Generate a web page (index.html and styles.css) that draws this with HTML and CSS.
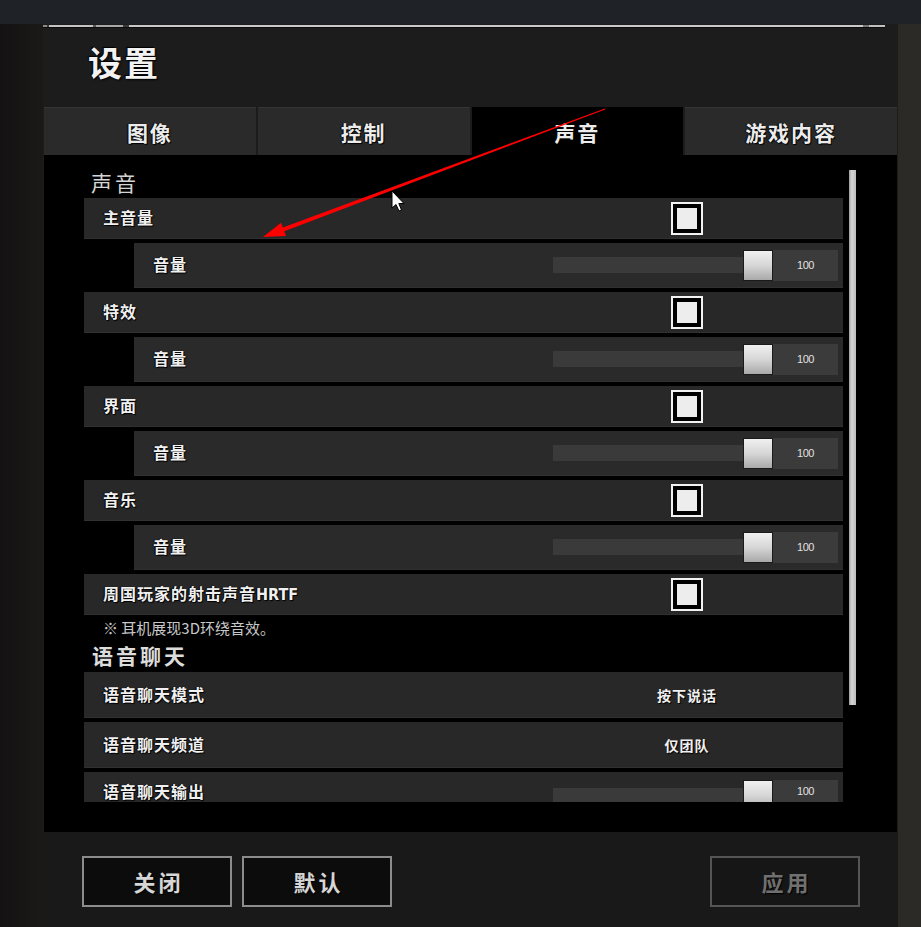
FILE: index.html
```html
<!DOCTYPE html>
<html lang="zh-CN">
<head>
<meta charset="utf-8">
<title>设置</title>
<link rel="stylesheet" href="styles.css">
</head>
<body>
<div class="screen">
  <div class="panel">
    <div class="topline"></div>
    <h1 class="title">设置</h1>
    <nav class="tabs">
      <div class="tab">图像</div>
      <div class="tab">控制</div>
      <div class="tab active">声音</div>
      <div class="tab">游戏内容</div>
    </nav>
    <div class="content">
      <div class="scroll">
        <div class="section">声音</div>

        <div class="row"><span class="label">主音量</span><span class="check"><i></i></span></div>
        <div class="row sub"><span class="label">音量</span><span class="slider"><span class="track"></span><span class="knob"></span><span class="val">100</span></span></div>

        <div class="row"><span class="label">特效</span><span class="check"><i></i></span></div>
        <div class="row sub"><span class="label">音量</span><span class="slider"><span class="track"></span><span class="knob"></span><span class="val">100</span></span></div>

        <div class="row"><span class="label">界面</span><span class="check"><i></i></span></div>
        <div class="row sub"><span class="label">音量</span><span class="slider"><span class="track"></span><span class="knob"></span><span class="val">100</span></span></div>

        <div class="row"><span class="label">音乐</span><span class="check"><i></i></span></div>
        <div class="row sub"><span class="label">音量</span><span class="slider"><span class="track"></span><span class="knob"></span><span class="val">100</span></span></div>

        <div class="row"><span class="label">周国玩家的射击声音<span class="latin">HRTF</span></span><span class="check"><i></i></span></div>
        <div class="note">※ 耳机展现3D环绕音效。</div>

        <div class="section second">语音聊天</div>
        <div class="row tall"><span class="label">语音聊天模式</span><span class="choice">按下说话</span></div>
        <div class="row tall"><span class="label">语音聊天频道</span><span class="choice">仅团队</span></div>
        <div class="row tall last"><span class="label">语音聊天输出</span><span class="slider"><span class="track"></span><span class="knob"></span><span class="val">100</span></span></div>
      </div>
      <div class="scrollbar"></div>
    </div>
    <div class="footer">
      <button class="btn">关闭</button>
      <button class="btn">默认</button>
      <button class="btn disabled">应用</button>
    </div>
  </div>
</div>
<svg class="overlay" width="921" height="927" viewBox="0 0 921 927">
  <polygon fill="#ff0000" points="263,237 281.1,222.7 282.9,227.4 604.8,108.5 605.2,109.5 284.3,231.2 286.1,235.9"/>
  <path d="M392 191 L392 208 L396 204.5 L399 211 L401.5 210 L398.8 203.5 L404 203.5 Z" fill="#fff" stroke="#000" stroke-width="1" stroke-linejoin="round"/>
</svg>
</body>
</html>
```

FILE: styles.css
```css
html, body {
  margin: 0;
  padding: 0;
}
body {
  width: 921px;
  height: 927px;
  overflow: hidden;
  position: relative;
  font-family: "Noto Sans CJK SC", "Noto Sans", "Liberation Sans", sans-serif;
  background:
    linear-gradient(#1f2226 0, #1f2226 24px, transparent 24px),
    linear-gradient(90deg, #141212 0, #1b1918 43px, #24221f 600px, #2b2a27 921px);
}
.screen {
  padding-top: 24px;
  padding-left: 43px;
}
.panel {
  width: 855px;
  height: 903px;
  background: #1c1c1c;
  display: flex;
  flex-direction: column;
}
.topline {
  width: 842px;
  height: 2px;
  margin-top: 1px;
  background:
    linear-gradient(90deg, #8a8a8a 0, #8a8a8a 4px, #3a3a3a 4px, #3a3a3a 6px, #c4c4c4 6px, #c4c4c4 50px, #5a5a5a 50px, #5a5a5a 53px, #a8a8a8 53px, #a8a8a8 80px, #3a3a3a 80px, #3a3a3a 86px, #c9c9c9 86px, #c9c9c9 820px, #777 820px, #777 826px, #c0c0c0 826px);
  border-bottom: 1px solid #0c0c0c;
  flex: none;
}
.title {
  margin: 0;
  height: 79px;
  box-sizing: border-box;
  padding: 15px 0 0 45px;
  font-size: 34px;
  line-height: 38px;
  font-weight: 700;
  letter-spacing: 2px;
  color: #f2f2f2;
  text-shadow: 1px 1px 2px #000, -1px -1px 1px #000;
  flex: none;
}
.tabs {
  display: flex;
  gap: 2px;
  margin-left: 1px;
  width: 853px;
  height: 48px;
  flex: none;
}
.tab {
  flex: 1;
  background: #2a2a2a;
  border-top: 1px solid #353535;
  box-sizing: border-box;
  display: flex;
  align-items: center;
  justify-content: center;
  font-size: 21px;
  font-weight: 700;
  letter-spacing: 2px;
  color: #ececec;
  text-shadow: 1px 1px 1px #000, -1px 0 1px #000;
}
.tab.active {
  background: #000;
  border-top-color: #000;
}
.content {
  margin-left: 1px;
  width: 853px;
  height: 677px;
  background: #000;
  display: flex;
  flex: none;
}
.scroll {
  margin-left: 40px;
  width: 759px;
  height: 647px;
  overflow: hidden;
  box-sizing: border-box;
  padding-top: 12px;
}
.scrollbar {
  margin-left: 6px;
  margin-top: 15px;
  width: 7px;
  height: 535px;
  background: linear-gradient(90deg, #9d9d9d, #d6d6d6 40%, #bcbcbc);
}
.section {
  height: 31px;
  line-height: 31px;
  padding-left: 7px;
  font-size: 21px;
  letter-spacing: 3px;
  color: #d4d4d4;
}
.section.second {
  height: 32px;
  line-height: 30px;
  padding-left: 8px;
  font-weight: 700;
  color: #dcdcdc;
}
.row {
  height: 41px;
  margin-bottom: 4px;
  background: #282828;
  border-bottom: 1px solid #313131;
  box-sizing: border-box;
  display: flex;
  align-items: center;
  padding-left: 19px;
}
.row.sub {
  height: 45px;
  margin-left: 50px;
  background: #2a2a2a;
}
.row.tall {
  height: 46px;
}
.row.last {
  align-items: flex-start;
}
.row.last .label {
  padding-top: 7px;
}
.row.last .slider {
  margin-top: 8px;
}
.label {
  flex: 1;
  font-size: 16px;
  font-weight: 700;
  letter-spacing: 1px;
  color: #f0f0f0;
  text-shadow: 1px 1px 1px #000, -1px 0 1px #000;
  padding-bottom: 2px;
}
.latin {
  font-family: "Liberation Sans Narrow", "DejaVu Sans Condensed", "Liberation Sans", sans-serif;
  letter-spacing: 0;
}
.check {
  width: 32px;
  height: 33px;
  box-sizing: border-box;
  border: 2px solid #f2f2f2;
  background: #000;
  padding: 4px;
  margin-right: 140px;
  display: flex;
}
.check i {
  flex: 1;
  background: #ededed;
}
.choice {
  width: 200px;
  margin-right: 56px;
  text-align: center;
  font-size: 14px;
  font-weight: 700;
  letter-spacing: 1px;
  color: #f0f0f0;
  text-shadow: 1px 1px 1px #000;
}
.slider {
  width: 285px;
  margin-right: 5px;
  height: 31px;
  display: flex;
  align-items: center;
}
.track {
  flex: 1;
  height: 16px;
  background: #3a3a3a;
}
.knob {
  width: 30px;
  height: 31px;
  box-sizing: border-box;
  border: 1px solid #1a1a1a;
  background: linear-gradient(#f0f0f0, #d6d6d6 50%, #a9a9a9);
}
.val {
  width: 65px;
  height: 31px;
  background: #3b3b3b;
  display: flex;
  align-items: center;
  justify-content: center;
  font-family: "Liberation Sans", sans-serif;
  font-size: 11px;
  color: #e0e0e0;
  letter-spacing: -0.5px;
}
.row.last .val {
  align-items: flex-start;
  padding-top: 5px;
  box-sizing: border-box;
}
.note {
  height: 25px;
  line-height: 26px;
  padding-left: 19px;
  margin-top: -4px;
  font-size: 15px;
  color: #c8c8c8;
  text-shadow: 1px 1px 1px #000;
}
.footer {
  flex: 1;
  background: #191919;
  display: flex;
  align-items: flex-start;
  padding: 24px 38px 0 39px;
  gap: 10px;
}
.btn {
  width: 150px;
  height: 51px;
  box-sizing: border-box;
  border: 2px solid #8c8c8c;
  background: #0c0c0c;
  color: #d6d6d6;
  font-family: "Noto Sans CJK SC", "Noto Sans", sans-serif;
  font-size: 22px;
  font-weight: 700;
  letter-spacing: 3px;
  padding: 0 0 2px 3px;
  text-shadow: 1px 1px 1px #000;
}
.btn.disabled {
  margin-left: auto;
  border-color: #555;
  background: #161616;
  color: #707070;
}
.overlay {
  position: absolute;
  left: 0;
  top: 0;
  pointer-events: none;
}
```
